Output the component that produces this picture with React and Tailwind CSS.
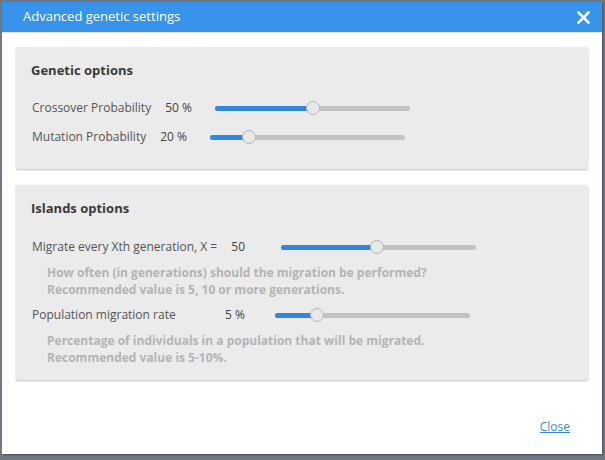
import React from 'react';

const font = { fontFamily: '"Open Sans", "Noto Sans", sans-serif' };

// simple readonly slider, thumb centered on the value
const Slider = ({ pct, className = '' }) => (
  <div className={`relative h-[5px] w-[195px] rounded-full bg-[#c2c2c2] ${className}`}>
    <div className="absolute left-0 top-0 h-full rounded-full bg-[#2f86e3]" style={{ width: `${pct}%` }} />
    <div
      className="absolute top-1/2 h-[14px] w-[14px] -translate-x-1/2 -translate-y-1/2 rounded-full border border-[#b5b5b5] bg-[#e8e8e8]"
      style={{ left: `${pct}%` }}
    />
  </div>
);

const Help = ({ children, className = '' }) => (
  <p className={`pl-[16px] text-[12px] font-bold leading-[17px] text-[#b4b4b4] ${className}`}>{children}</p>
);

export default function App() {
  return (
    <div className="h-[460px] w-[605px] overflow-hidden bg-[#6f7884] pl-[2px] pt-[2px]" style={font}>
      <div className="flex h-[452px] w-[600px] flex-col bg-white shadow-[1px_1px_2px_rgba(0,0,0,0.35)]">
        {/* header */}
        <div className="flex h-[31px] items-center justify-between border-b border-[#e2e2e2] bg-[#3794ea] pl-[21px] pr-[12px]">
          <span className="text-[13px] text-white">Advanced genetic settings</span>
          <svg width="13" height="13" viewBox="0 0 13 13" className="mt-[1px]">
            <path d="M1.5 1.5 L11.5 11.5 M11.5 1.5 L1.5 11.5" stroke="white" strokeWidth="2.6" strokeLinecap="square" />
          </svg>
        </div>

        {/* body */}
        <div className="flex flex-col gap-[16px] px-[14px] pt-[14px] text-[12px]">
          <div className="rounded-[2px] bg-[#ebebeb] px-[15px] pb-[22px] pt-[15px] shadow-[0_1px_2px_rgba(0,0,0,0.25)]">
            <h3 className="text-[13px] font-bold leading-[17px] text-[#3a3a3a]">Genetic options</h3>
            <div className="mt-[19px] flex h-[20px] items-center pl-[1px]">
              <span className="w-[123px] shrink-0 text-[#555]">Crossover Probability</span>
              <span className="w-[37px] shrink-0 text-right text-[#444]">50 %</span>
              <Slider pct={50} className="ml-[23px] shrink-0" />
            </div>
            <div className="mt-[9px] flex h-[20px] items-center pl-[1px]">
              <span className="w-[118px] shrink-0 text-[#555]">Mutation Probability</span>
              <span className="w-[37px] shrink-0 text-right text-[#444]">20 %</span>
              <Slider pct={20} className="ml-[23px] shrink-0" />
            </div>
          </div>

          <div className="rounded-[2px] bg-[#ebebeb] px-[15px] pb-[14px] pt-[15px] shadow-[0_1px_2px_rgba(0,0,0,0.25)]">
            <h3 className="text-[13px] font-bold leading-[17px] text-[#3a3a3a]">Islands options</h3>
            <div className="mt-[20px] flex h-[20px] items-center pl-[1px]">
              <span className="w-[190px] shrink-0 text-[#555]">Migrate every Xth generation, X =</span>
              <span className="w-[23px] shrink-0 text-right text-[#444]">50</span>
              <Slider pct={49} className="ml-[36px] shrink-0" />
            </div>
            <Help className="mt-[7px]">
              How often (in generations) should the migration be performed?
              <br />
              Recommended value is 5, 10 or more generations.
            </Help>
            <div className="mt-[7px] flex h-[20px] items-center pl-[1px]">
              <span className="w-[190px] shrink-0 text-[#555]">Population migration rate</span>
              <span className="w-[23px] shrink-0 text-right text-[#444]">5 %</span>
              <Slider pct={21.5} className="ml-[30px] shrink-0" />
            </div>
            <Help className="mt-[7px]">
              Percentage of individuals in a population that will be migrated.
              <br />
              Recommended value is 5-10%.
            </Help>
          </div>
        </div>

        {/* footer */}
        <div className="mt-auto flex justify-end pb-[18px] pr-[32px]">
          <a href="#" className="text-[12px] text-[#3b87d9] underline">Close</a>
        </div>
      </div>
    </div>
  );
}
